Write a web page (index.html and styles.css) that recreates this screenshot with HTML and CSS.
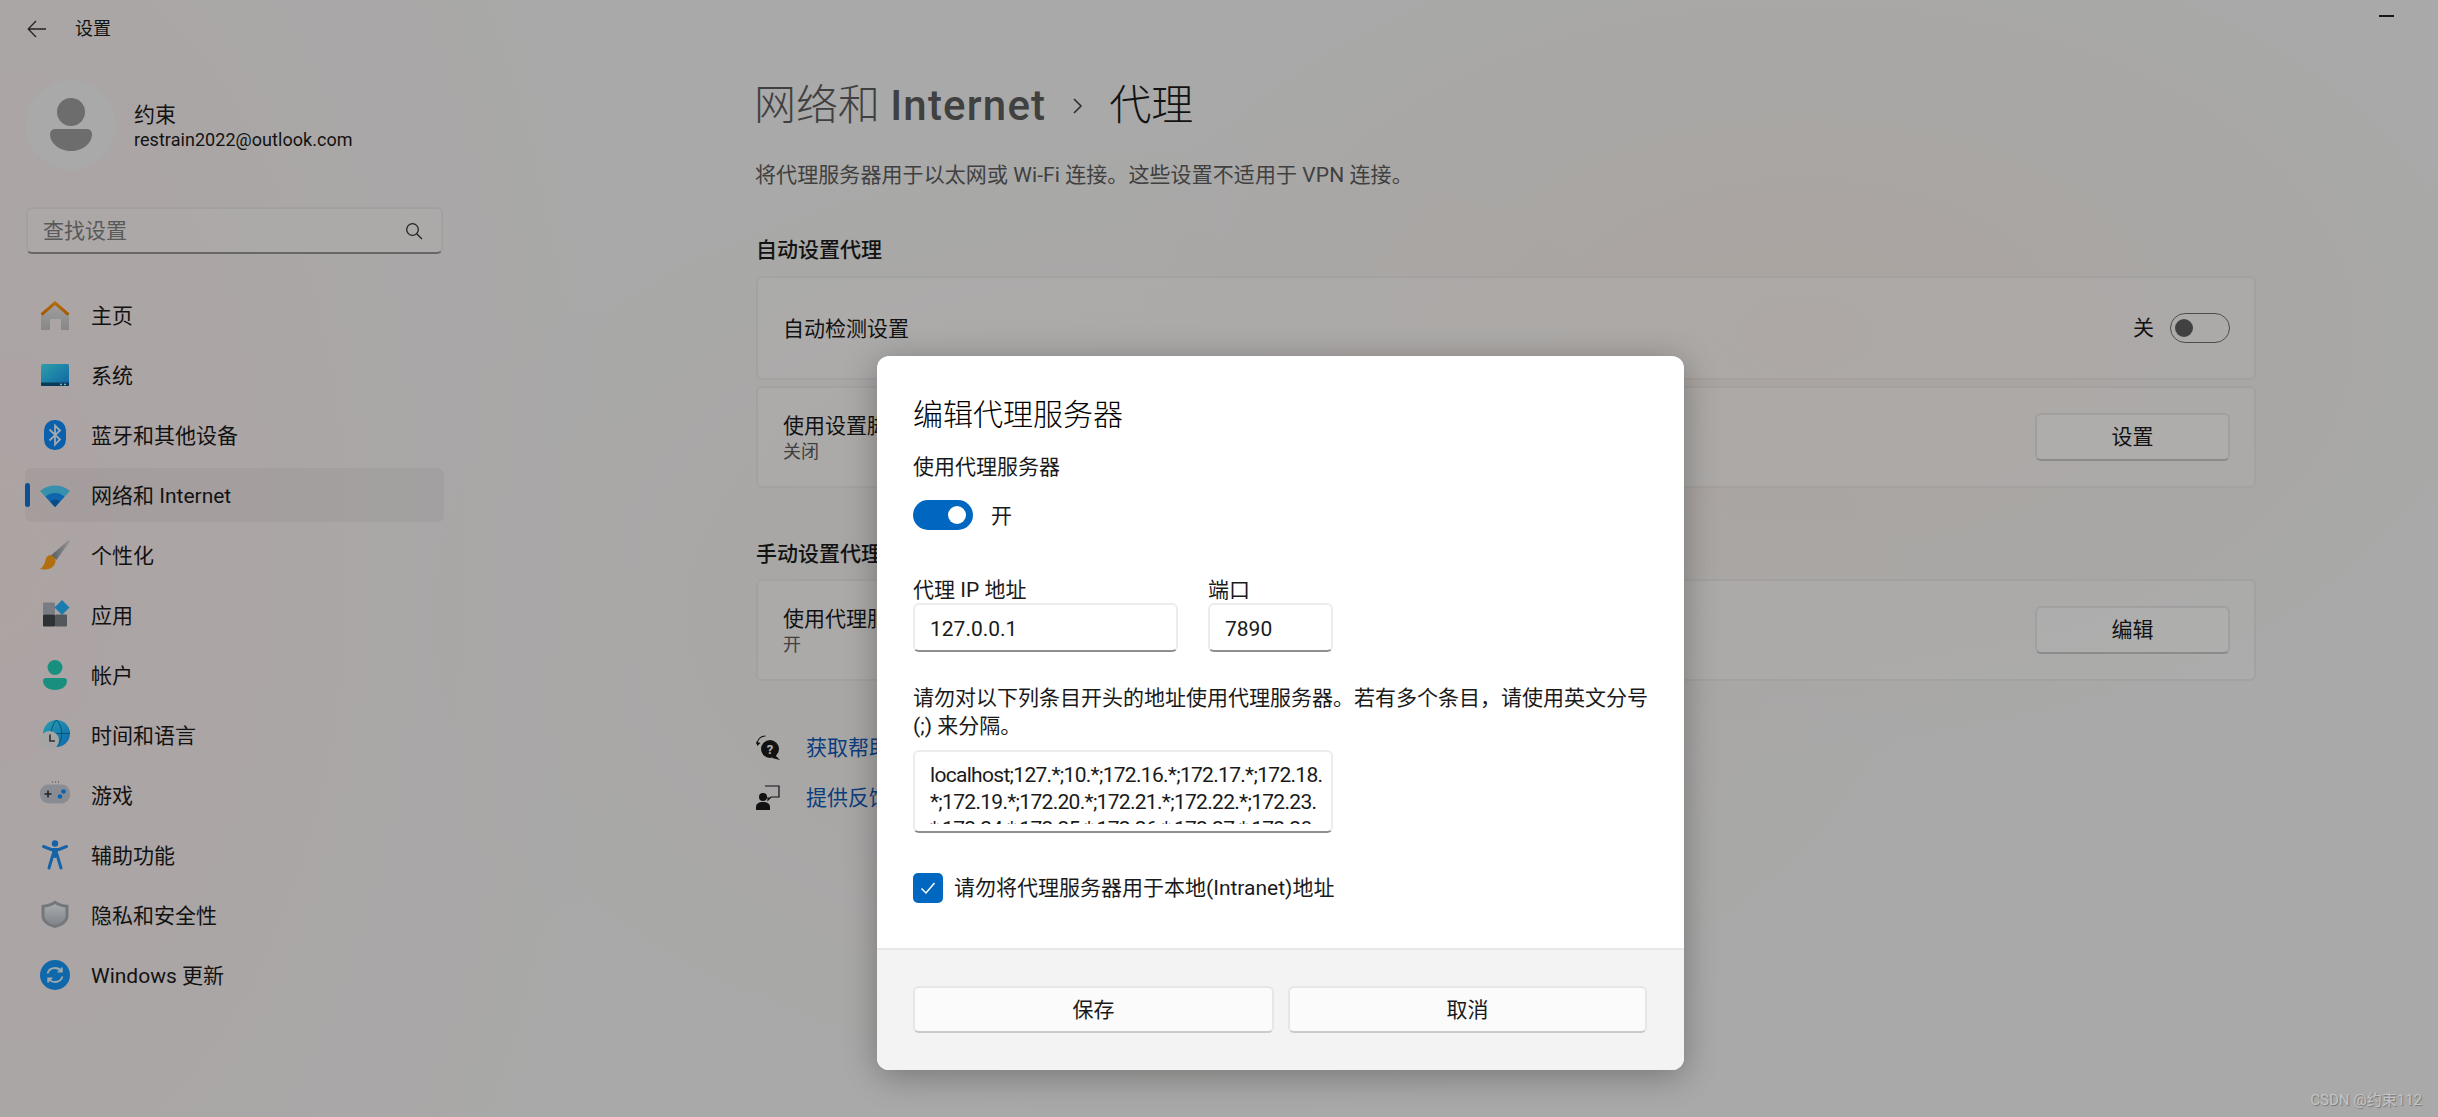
FILE: index.html
```html
<!DOCTYPE html>
<html lang="zh-CN">
<head>
    <meta charset="UTF-8">
    <title>设置 - 代理</title>
    <link rel="stylesheet" href="styles.css">
</head>
<body>

    <!-- shared gradients for the sidebar icons -->
    <svg class="defs" width="0" height="0">
        <defs>
            <linearGradient id="gHouse" x1="0" y1="0" x2="0" y2="1"><stop offset="0" stop-color="#e6e6e6"/><stop offset="1" stop-color="#c2c2c2"/></linearGradient>
            <linearGradient id="gRoof" x1="0" y1="0" x2="0" y2="1"><stop offset="0" stop-color="#ffa010"/><stop offset="1" stop-color="#f07800"/></linearGradient>
            <linearGradient id="gScreen" x1="0" y1="0" x2="1" y2="1"><stop offset="0" stop-color="#40e4f4"/><stop offset="1" stop-color="#1790ec"/></linearGradient>
            <linearGradient id="gHandle" x1="0" y1="0" x2="1" y2="0"><stop offset="0" stop-color="#7f8489"/><stop offset="1" stop-color="#d2d4d6"/></linearGradient>
            <linearGradient id="gShield" x1="0" y1="0" x2="0" y2="1"><stop offset="0" stop-color="#f0f3f7"/><stop offset="1" stop-color="#b7bdc5"/></linearGradient>
            <linearGradient id="gGlobe" x1="0" y1="0" x2="1" y2="1"><stop offset="0" stop-color="#3ce4fb"/><stop offset="1" stop-color="#0f96f8"/></linearGradient>
        </defs>
    </svg>

    <div class="app">
        <aside class="sidebar">
            <div class="titlebar">
                <svg class="back-icon" width="20" height="18" viewBox="0 0 20 18"><path d="M9 1 1.200 9 9 17M1.500 9H19" fill="none" stroke="#333" stroke-width="1.300"/></svg>
                <span class="app-title">设置</span>
            </div>

            <div class="profile">
                <div class="avatar">
                    <svg width="90" height="90" viewBox="0 0 90 90">
                        <circle cx="45" cy="32" r="14" fill="#9c9c9c"/>
                        <path d="M24 54a5 5 0 0 1 5-5h32a5 5 0 0 1 5 5c0 10-10 17-21 17s-21-7-21-17z" fill="#9c9c9c"/>
                    </svg>
                </div>
                <div class="profile-text">
                    <div class="profile-name">约束</div>
                    <div class="profile-mail">restrain2022@outlook.com</div>
                </div>
            </div>

            <div class="search">
                <span>查找设置</span>
                <svg width="18" height="18" viewBox="0 0 18 18"><circle cx="7.500" cy="7.500" r="5.800" fill="none" stroke="#333" stroke-width="1.300"/><path d="M11.700 11.700 17 17" stroke="#333" stroke-width="1.300"/></svg>
            </div>

            <nav class="nav">
                <a class="nav-row">
                    <svg class="nav-icon" viewBox="0 0 30 30"><path d="M1 14 15 3l14 11v15a1 1 0 0 1-1 1h-7V19H10v11H2a1 1 0 0 1-1-1z" fill="url(#gHouse)"/><path d="M15 1 .5 13.500l2 2.300L15 5l12.500 10.800 2-2.300z" fill="url(#gRoof)"/></svg>
                    <span>主页</span>
                </a>
                <a class="nav-row">
                    <svg class="nav-icon" viewBox="0 0 30 30"><rect x="1" y="4" width="28" height="22" rx="1.500" fill="url(#gScreen)"/><path d="M1 22.500h28V25a1 1 0 0 1-1 1H2a1 1 0 0 1-1-1z" fill="#0f5480"/><rect x="20" y="23.700" width="2" height="1.500" fill="#cfe"/><rect x="24" y="23.700" width="2" height="1.500" fill="#cfe"/></svg>
                    <span>系统</span>
                </a>
                <a class="nav-row">
                    <svg class="nav-icon" viewBox="0 0 30 30"><rect x="4" y="0" width="22" height="30" rx="10.500" fill="#0e8cf8"/><path d="M9.500 9.500 20 19.500 15 24.500V5.500l5 5L9.500 20.500" fill="none" stroke="#e8f2fb" stroke-width="1.800"/></svg>
                    <span>蓝牙和其他设备</span>
                </a>
                <a class="nav-row nav-row-active">
                    <svg class="nav-icon" viewBox="0 0 30 30"><path d="M0 11C4 7.500 9 5.500 15 5.500S26 7.500 30 11L15 27z" fill="#50d0f8"/><path d="M5.500 16.800C8 14.500 11 13 15 13s7 1.500 9.500 3.800L15 27z" fill="#1590f8"/><path d="M10 21.500C11.500 20.200 13 19.500 15 19.500s3.500.7 5 2L15 27z" fill="#0e6ac5"/></svg>
                    <span>网络和 Internet</span>
                </a>
                <a class="nav-row">
                    <svg class="nav-icon" viewBox="0 0 30 30"><path d="M28 .5c1-.5 2 .4 1.500 1.400L16.500 20 11 15.500z" fill="url(#gHandle)"/><path d="M11 15c-3 0-5 2-5.500 5C5 23 3 27 0 29c5 1 11 .5 13.500-3 2-2.800 2.500-5 1.500-7.500z" fill="#ffa017"/></svg>
                    <span>个性化</span>
                </a>
                <a class="nav-row">
                    <svg class="nav-icon" viewBox="0 0 30 30"><rect x="3" y="2.500" width="12" height="12" rx="1" fill="#aeb4bc"/><rect x="3" y="14.500" width="12" height="12" rx="1" fill="#42474c"/><rect x="15" y="14.500" width="12" height="12" rx="1" fill="#797e83"/><path d="M22 0l7.500 7.500L22 15l-7.500-7.500z" fill="#28b4f8"/></svg>
                    <span>应用</span>
                </a>
                <a class="nav-row">
                    <svg class="nav-icon" viewBox="0 0 30 30"><circle cx="15" cy="7.500" r="7.500" fill="#25ceb7"/><path d="M3 21a3 3 0 0 1 3-3h18a3 3 0 0 1 3 3c0 5-5 9-12 9S3 26 3 21z" fill="#25ceb7"/></svg>
                    <span>帐户</span>
                </a>
                <a class="nav-row">
                    <svg class="nav-icon" viewBox="0 0 30 30"><circle cx="16.500" cy="13.500" r="13.500" fill="url(#gGlobe)"/><path d="M3 13.500h27M16.500 0c-7 7-7 20 0 27M16.500 0c7 7 7 20 0 27" fill="none" stroke="#0a6fa8" stroke-width=".9"/><circle cx="9.500" cy="20.500" r="9.500" fill="#ececec"/><path d="M10 14.500v6.500h5" fill="none" stroke="#444" stroke-width="1.600"/></svg>
                    <span>时间和语言</span>
                </a>
                <a class="nav-row">
                    <svg class="nav-icon" viewBox="0 0 30 30"><rect x="0" y="4.500" width="30" height="19" rx="8.500" fill="#c5cbd3"/><path d="M8 10.500v7M4.500 14h7" stroke="#333" stroke-width="1.600"/><circle cx="23.500" cy="11.500" r="2.300" fill="#0e8ffb"/><circle cx="20" cy="16.500" r="2.300" fill="#0e8ffb"/><path d="M12 2h1M15 2h1M18 2h1" stroke="#666" stroke-width="1"/></svg>
                    <span>游戏</span>
                </a>
                <a class="nav-row">
                    <svg class="nav-icon" viewBox="0 0 30 30"><circle cx="15" cy="3.500" r="3.200" fill="#2090f0"/><path d="M3.500 6.500 11 9.500h8l7.500-3M15 9.500v7M13 14.500 9 28M17 14.500l4 13.500" fill="none" stroke="#2090f0" stroke-width="3" stroke-linecap="round"/><path d="M12 9.500h6v7h-6z" fill="#2090f0"/></svg>
                    <span>辅助功能</span>
                </a>
                <a class="nav-row">
                    <svg class="nav-icon" viewBox="0 0 30 30"><path d="M15 .5c3 2.500 8 4 13.500 4.500v11C28.500 22 22 26.500 15 28c-7-1.500-13.500-6-13.500-12V5C7 4.500 12 3 15 .5z" fill="#a5abb1"/><path d="M15 4c2.500 1.800 6.500 3 10.500 3.500v8.500C25.500 20.500 20.500 24 15 25.200 9.500 24 4.500 20.500 4.500 16V7.500C8.500 7 12.500 5.800 15 4z" fill="url(#gShield)"/></svg>
                    <span>隐私和安全性</span>
                </a>
                <a class="nav-row">
                    <svg class="nav-icon" viewBox="0 0 30 30"><circle cx="15" cy="15" r="15" fill="#1596f3"/><path d="M7.500 13.500C8.500 10 11.500 8 15 8c2.500 0 4.800 1.200 6.300 3M21.800 7.500v4.200h-4.200M22.500 16.500C21.500 20 18.500 22 15 22c-2.500 0-4.800-1.200-6.300-3M8.200 22.500v-4.200h4.200" fill="none" stroke="#e6f2fb" stroke-width="1.800"/></svg>
                    <span>Windows 更新</span>
                </a>
            </nav>
        </aside>

        <main class="main">
            <h1 class="page-title">
                <span class="crumb">网络和 <b>Internet</b></span>
                <svg class="crumb-sep" width="12" height="18" viewBox="0 0 12 18"><path d="M2 2l7 7-7 7" fill="none" stroke="#444" stroke-width="1.600"/></svg>
                <span>代理</span>
            </h1>
            <p class="page-desc">将代理服务器用于以太网或 Wi-Fi 连接。这些设置不适用于 VPN 连接。</p>

            <h2 class="section-title first">自动设置代理</h2>
            <div class="card card-tall">
                <div class="card-label">自动检测设置</div>
                <div class="card-right">
                    <span>关</span>
                    <span class="switch-off"><i></i></span>
                </div>
            </div>
            <div class="card">
                <div>
                    <div class="card-label">使用设置脚本</div>
                    <div class="card-sub">关闭</div>
                </div>
                <button class="card-btn">设置</button>
            </div>

            <h2 class="section-title second">手动设置代理</h2>
            <div class="card">
                <div>
                    <div class="card-label">使用代理服务器</div>
                    <div class="card-sub">开</div>
                </div>
                <button class="card-btn">编辑</button>
            </div>

            <div class="help-links">
                <a class="help-row">
                    <svg width="24" height="26" viewBox="0 0 24 26"><path d="M1 9C1.500 4 5 1 9.500 1" fill="none" stroke="#1a1a1a" stroke-width="1.200"/><path d="M0 6.500 1.300 11 4.500 8z" fill="#1a1a1a"/><circle cx="14" cy="14" r="9" fill="#1a1a1a"/><path d="M19 20l5 5-8-2z" fill="#1a1a1a"/><text x="14" y="19" class="help-q">?</text></svg>
                    <span>获取帮助</span>
                </a>
                <a class="help-row">
                    <svg width="24" height="26" viewBox="0 0 24 26"><circle cx="7" cy="12" r="4" fill="#1a1a1a"/><path d="M0 25v-3c0-3 2.500-5 7-5s7 2 7 5v3z" fill="#1a1a1a"/><path d="M9 1h14v11h-8l-3 3v-3" fill="none" stroke="#1a1a1a" stroke-width="1.200"/></svg>
                    <span>提供反馈</span>
                </a>
            </div>
        </main>
    </div>

    <svg class="minimize" width="15" height="2"><rect width="15" height="2" fill="#222"/></svg>

    <div class="scrim"></div>

    <section class="dialog">
        <div class="dialog-body">
            <h2 class="dialog-title">编辑代理服务器</h2>
            <div class="field-label">使用代理服务器</div>
            <div class="toggle-row">
                <span class="switch-on"><i></i></span>
                <span class="toggle-text">开</span>
            </div>

            <div class="proxy-fields">
                <div class="field">
                    <label class="input-label">代理 IP 地址</label>
                    <div class="input input-ip">127.0.0.1</div>
                </div>
                <div class="field">
                    <label class="input-label">端口</label>
                    <div class="input input-port">7890</div>
                </div>
            </div>

            <p class="hint">请勿对以下列条目开头的地址使用代理服务器。若有多个条目，请使用英文分号<br>(;) 来分隔。</p>
            <div class="textbox">
                <div class="textbox-inner">localhost;127.*;10.*;172.16.*;172.17.*;172.18.<br>*;172.19.*;172.20.*;172.21.*;172.22.*;172.23.<br>*;172.24.*;172.25.*;172.26.*;172.27.*;172.28.</div>
            </div>

            <div class="check-row">
                <span class="checkbox">
                    <svg width="18" height="18" viewBox="0 0 18 18"><path d="M2.500 9.500 7 14l8.500-10" fill="none" stroke="#fff" stroke-width="1.500"/></svg>
                </span>
                <span>请勿将代理服务器用于本地(Intranet)地址</span>
            </div>
        </div>
        <div class="dialog-footer">
            <button class="dialog-btn btn-save">保存</button>
            <button class="dialog-btn btn-cancel">取消</button>
        </div>
    </section>

    <div class="watermark">CSDN @约束112</div>

</body>
</html>
```

FILE: styles.css
```css
/* Basic reset */
* {
    margin: 0;
    padding: 0;
    box-sizing: border-box;
}

body {
    width: 2438px;
    height: 1117px;
    overflow: hidden;
    position: relative;
    font-family: Roboto, "Noto Sans CJK SC", sans-serif;
    font-size: 21px;
    line-height: 28px;
    color: #1a1a1a;
    background-color: #f1f2f1;
    background-image:
        radial-gradient(620px 1100px at 0% 50%, rgba(248, 234, 234, 1), transparent),
        radial-gradient(700px 420px at 74% 30%, rgba(246, 234, 228, 0.9), transparent),
        radial-gradient(800px 500px at 48% 55%, rgba(246, 236, 232, 0.7), transparent);
}

.defs {
    position: absolute;
}

.app {
    display: flex;
    height: 100%;
}

/* Sidebar */
.sidebar {
    flex: 0 0 470px;
    padding-left: 25px;
}

.titlebar {
    display: flex;
    align-items: center;
    height: 58px;
    padding-left: 2px;
}

.back-icon {
    margin-right: 28px;
}

.app-title {
    font-size: 18px;
}

.profile {
    display: flex;
    align-items: center;
    margin-top: 22px;
    margin-left: 1px;
}

.avatar {
    width: 90px;
    height: 90px;
    border-radius: 50%;
    background-color: #f3f2f2;
}

.avatar svg {
    display: block;
}

.profile-text {
    margin-left: 18px;
}

.profile-name {
    line-height: 26px;
    margin-top: 3px;
}

.profile-mail {
    font-size: 18px;
    line-height: 24px;
    letter-spacing: 0.05px;
}

.search {
    display: flex;
    align-items: center;
    justify-content: space-between;
    width: 417px;
    height: 47px;
    margin: 37px 0 0 1px;
    padding: 0 18px 0 15px;
    background-color: rgba(255, 255, 255, 0.25);
    border: 2px solid rgba(0, 0, 0, 0.05);
    border-bottom: 2px solid #949494;
    border-radius: 6px;
    color: #808080;
}

.nav {
    width: 419px;
    margin-top: 34px;
}

.nav-row {
    display: flex;
    align-items: center;
    position: relative;
    height: 54px;
    margin-bottom: 6px;
    padding-left: 15px;
    border-radius: 6px;
}

.nav-row span {
    margin-left: 21px;
    padding-top: 1px;
}

.nav-icon {
    width: 30px;
    height: 30px;
}

.nav-row-active {
    background-color: rgba(0, 0, 0, 0.04);
}

.nav-row-active::before {
    content: '';
    position: absolute;
    left: 0;
    top: 15px;
    width: 5px;
    height: 24px;
    border-radius: 3px;
    background-color: #1272d6;
}

/* Main column */
.main {
    flex: 1;
    padding: 75px 182px 0 286px;
}

.page-title {
    display: flex;
    align-items: center;
    height: 60px;
    margin-left: -2px;
    padding-top: 2px;
    font-size: 42px;
    font-weight: 300;
}

.crumb {
    color: #5c5c5c;
}

.crumb b {
    font-weight: 500;
    letter-spacing: 1.2px;
}

.crumb-sep {
    margin: 0 25px 0 26px;
}

.page-desc {
    margin-top: 26px;
    margin-left: -1px;
    letter-spacing: 0.08px;
    color: #5c5c5c;
}

.section-title {
    font-size: 21px;
    font-weight: 500;
}

.section-title.first {
    margin-top: 47px;
    margin-bottom: 12px;
}

.section-title.second {
    margin-top: 52px;
    margin-bottom: 11px;
}

.card {
    display: flex;
    align-items: center;
    justify-content: space-between;
    height: 102px;
    padding: 0 24px 0 25px;
    background-color: rgba(255, 255, 255, 0.3);
    border: 2px solid rgba(0, 0, 0, 0.05);
    border-radius: 6px;
}

.card-tall {
    height: 104px;
    margin-bottom: 6px;
}

.card-label {
    line-height: 26px;
    margin-top: 2px;
}

.card-sub {
    font-size: 18px;
    line-height: 24px;
    margin-top: 1px;
    color: #5c5c5c;
}

.card-right {
    display: flex;
    align-items: center;
    gap: 16px;
}

.switch-off {
    display: block;
    width: 60px;
    height: 30px;
    padding: 4.5px 4px;
    border: 1.5px solid #6e6e6e;
    border-radius: 15px;
}

.switch-off i {
    display: block;
    width: 18px;
    height: 18px;
    border-radius: 50%;
    background-color: #5e5e5e;
}

.card-btn {
    width: 195px;
    height: 48px;
    font: inherit;
    color: inherit;
    background-color: rgba(255, 255, 255, 0.4);
    border: 2px solid rgba(0, 0, 0, 0.08);
    border-bottom-color: rgba(0, 0, 0, 0.2);
    border-radius: 6px;
}

.help-links {
    margin-top: 42px;
}

.help-row {
    display: flex;
    align-items: center;
    height: 50px;
    color: #1058b4;
}

.help-row span {
    margin-left: 26px;
}

.help-q {
    font-size: 13px;
    font-weight: 700;
    fill: #fff;
    text-anchor: middle;
}

.minimize {
    position: absolute;
    top: 15px;
    left: 2379px;
}

/* Dialog over the dimmed window */
.scrim {
    position: absolute;
    inset: 0;
    background-color: rgba(0, 0, 0, 0.3);
}

.dialog {
    position: absolute;
    left: 877px;
    top: 356px;
    width: 807px;
    height: 714px;
    display: flex;
    flex-direction: column;
    background-color: #fff;
    border-radius: 12px;
    overflow: hidden;
    box-shadow: 0 6px 34px rgba(0, 0, 0, 0.3);
}

.dialog-body {
    flex: 1;
    padding: 39px 36px 0;
}

.dialog-title {
    font-size: 30px;
    font-weight: 300;
    line-height: 40px;
    color: #000;
}

.field-label {
    margin-top: 18px;
}

.toggle-row {
    display: flex;
    align-items: center;
    gap: 18px;
    height: 30px;
    margin-top: 19px;
}

.toggle-text {
    padding-top: 2px;
}

.switch-on {
    display: block;
    width: 60px;
    height: 30px;
    padding: 6px 7px 6px 35px;
    border-radius: 15px;
    background-color: #0067c0;
}

.switch-on i {
    display: block;
    width: 18px;
    height: 18px;
    border-radius: 50%;
    background-color: #fff;
}

.proxy-fields {
    display: flex;
    gap: 30px;
    margin-top: 48px;
}

.input-label {
    display: block;
    line-height: 25px;
}

.input {
    height: 49px;
    line-height: 49px;
    padding-left: 15px;
    background-color: #fff;
    border: 2px solid #ececec;
    border-bottom: 2px solid #8f8f8f;
    border-radius: 6px;
}

.input-ip {
    width: 265px;
}

.input-port {
    width: 125px;
}

.hint {
    margin-top: 32px;
    white-space: nowrap;
}

.textbox {
    width: 420px;
    height: 83px;
    margin-top: 10px;
    padding: 0 4px 0 15px;
    background-color: #fff;
    border: 2px solid #ececec;
    border-bottom: 2px solid #8f8f8f;
    border-radius: 6px;
}

.textbox-inner {
    height: 72px;
    padding-top: 10px;
    overflow: hidden;
    line-height: 27px;
    letter-spacing: -0.7px;
    white-space: nowrap;
}

.check-row {
    display: flex;
    align-items: center;
    gap: 11px;
    margin-top: 40px;
    height: 30px;
}

.checkbox {
    display: flex;
    align-items: center;
    justify-content: center;
    width: 30px;
    height: 30px;
    border-radius: 5px;
    background-color: #0067c0;
}

.dialog-footer {
    display: flex;
    gap: 14px;
    height: 122px;
    padding: 36px 0 0 36px;
    background-color: #f3f3f3;
    border-top: 2px solid #e8e8e8;
}

.dialog-btn {
    height: 47px;
    font: inherit;
    color: inherit;
    background-color: #fbfbfb;
    border: 2px solid #e6e6e6;
    border-bottom-color: #cacaca;
    border-radius: 6px;
}

.btn-save {
    width: 361px;
}

.btn-cancel {
    width: 359px;
}

.watermark {
    position: absolute;
    right: 16px;
    bottom: 7px;
    font-size: 15px;
    line-height: 20px;
    color: #c4c4c4;
    text-shadow: 1px 1px 1px #777;
}
```
